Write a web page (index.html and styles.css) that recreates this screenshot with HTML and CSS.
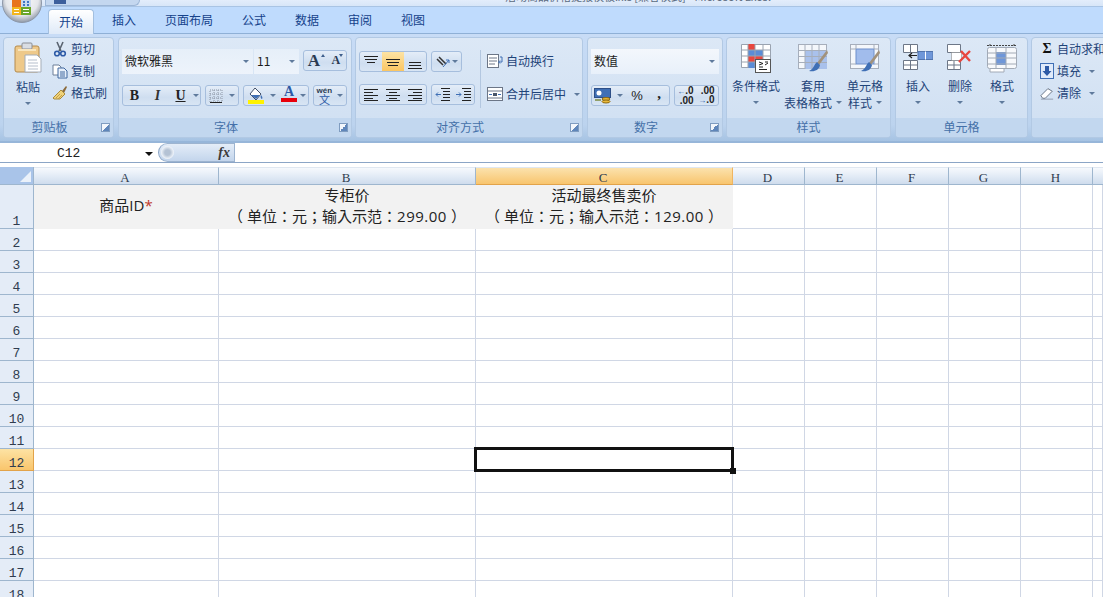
FILE: index.html
```html
<!DOCTYPE html>
<html lang="zh-CN">
<head>
<meta charset="utf-8">
<title>Excel</title>
<link rel="stylesheet" href="styles.css">
</head>
<body>
<div class="app">
  <svg class="orb" viewBox="0 0 44 30" width="44" height="30">
    <defs>
      <radialGradient id="orbg" cx="50%" cy="40%" r="60%"><stop offset="0" stop-color="#fff"/><stop offset=".7" stop-color="#e4e6ea"/><stop offset="1" stop-color="#8f98a6"/></radialGradient>
    </defs>
    <circle cx="22" cy="3" r="19.5" fill="url(#orbg)" stroke="#8c97a8"/>
    <rect x="12" y="0" width="9" height="7" fill="#e8741c"/>
    <rect x="21" y="0" width="10" height="7" fill="#c9d9f0"/>
    <rect x="12" y="7" width="9" height="8" fill="#f3b61e"/>
    <rect x="21" y="7" width="10" height="8" fill="#6aa628"/>
    <path d="M23 1h2v2h-2zM27 1h2v2h-2zM23 4h2v2h-2zM27 4h2v2h-2z" fill="#3f74c4"/>
    <path d="M14 9h5v1h-5zM14 12h5v1h-5zM23 9h6v1h-6zM23 12h6v1h-6z" fill="#fff"/>
  </svg>

  <header class="titlebar">
    <div class="qat"><span class="qat-save"></span></div>
    <div class="title-text">活动商品价格提报模板.xls [兼容模式] - Microsoft Excel</div>
  </header>

  <nav class="tabs">
    <span class="tab tab-active">开始</span>
    <span class="tab">插入</span>
    <span class="tab">页面布局</span>
    <span class="tab">公式</span>
    <span class="tab">数据</span>
    <span class="tab">审阅</span>
    <span class="tab">视图</span>
  </nav>

  <section class="ribbon">
    <div class="group g-clip">
      <div class="group-body">
        <div class="big big-paste">
          <svg class="big-ic" viewBox="0 0 30 32" width="30" height="32">
            <rect x="2" y="4" width="24" height="26" rx="2" fill="#eec98a" stroke="#b48a4c"/>
            <rect x="9" y="1" width="10" height="6" rx="1" fill="#d9dde3" stroke="#8b8f96"/>
            <rect x="5" y="7" width="18" height="2" fill="#f8e6bf"/>
            <path d="M12 13h12l4 4v13H12z" fill="#fff" stroke="#a5adb8"/>
            <path d="M15 18h9M15 21h10M15 24h10M15 27h10" stroke="#b6bfcc"/>
          </svg>
          <span class="big-text">粘贴</span>
          <span class="big-text"><i class="caret"></i></span>
        </div>
        <div class="small-list">
          <div class="small">
            <svg viewBox="0 0 16 16" width="16" height="16"><path d="M5 1l4 9M11 1L7 10" stroke="#5a6470" stroke-width="1.6" fill="none"/><circle cx="5" cy="12.5" r="2.3" fill="none" stroke="#2d5aa6" stroke-width="1.6"/><circle cx="11" cy="12.5" r="2.3" fill="none" stroke="#2d5aa6" stroke-width="1.6"/></svg>
            <span>剪切</span>
          </div>
          <div class="small">
            <svg viewBox="0 0 16 16" width="16" height="16"><path d="M1 2h6l2 2v8H1z" fill="#fff" stroke="#6d7f98"/><path d="M6 5h6l3 3v7H6z" fill="#e6effa" stroke="#41689f"/><path d="M8 9h5M8 11h5M8 13h5" stroke="#41689f"/></svg>
            <span>复制</span>
          </div>
          <div class="small">
            <svg viewBox="0 0 16 16" width="16" height="16"><path d="M10 6l4-5 1 1-3 6z" fill="#8b6a3a"/><path d="M9 5l4 4-5 5-6 0 -1-1z" fill="#efd27a" stroke="#a88a3c"/><path d="M4 13l4-4M6 14l4-4" stroke="#c49f45"/></svg>
            <span>格式刷</span>
          </div>
        </div>
      </div>
      <div class="group-label"><span>剪贴板</span><i class="launcher"></i></div>
    </div>

    <div class="group g-font">
      <div class="group-body stack">
        <div class="tool-row">
          <div class="combo w-font"><span>微软雅黑</span><i class="caret"></i></div>
          <div class="combo w-size"><span>11</span><i class="caret"></i></div>
          <div class="btns w-grow">
            <span class="btn-cell glyph-a big-a">A<i class="tri-up"></i></span>
            <span class="btn-cell glyph-a small-a">A<i class="tri-down"></i></span>
          </div>
        </div>
        <div class="tool-row row-low">
          <div class="btns w-biu">
            <span class="btn-cell fmt fmt-b">B</span>
            <span class="btn-cell fmt fmt-i">I</span>
            <span class="btn-cell fmt fmt-u">U</span>
            <span class="btn-cell"><i class="caret"></i></span>
          </div>
          <div class="btns w-34">
            <span class="btn-cell">
              <svg viewBox="0 0 14 14" width="14" height="14"><path d="M1 1h12v12H1zM5 1v12M9 1v12M1 5h12M1 9h12" fill="none" stroke="#8a94a3" stroke-dasharray="1 1"/><path d="M1 13.5h12" stroke="#222"/></svg>
            </span>
            <span class="btn-cell"><i class="caret"></i></span>
          </div>
          <div class="btns w-fill">
            <span class="btn-cell">
              <svg viewBox="0 0 18 18" width="18" height="18"><path d="M8 1l6 6-5 6-6-6z" fill="#fff" stroke="#41506a"/><path d="M4 8h9l-4 4z" fill="#3f6fb5"/><path d="M14 8c1 1 2 3 1 4-1 0-2-2-1-4z" fill="#3f6fb5"/><rect x="1" y="13" width="16" height="4" fill="#fff200"/></svg>
            </span>
            <span class="btn-cell"><i class="caret"></i></span>
            <span class="btn-cell color-a">A</span>
            <span class="btn-cell"><i class="caret"></i></span>
          </div>
          <div class="btns w-34">
            <span class="btn-cell wen"><small>wén</small><b>文</b></span>
            <span class="btn-cell"><i class="caret"></i></span>
          </div>
        </div>
      </div>
      <div class="group-label"><span>字体</span><i class="launcher"></i></div>
    </div>

    <div class="group g-align">
      <div class="group-body align-body">
        <div class="align-tools">
          <div class="tool-row">
            <div class="btns w-68">
              <span class="btn-cell"><svg viewBox="0 0 14 14" width="14" height="14"><path d="M0 1.5h14M1 4.5h12M3 7.500h8" stroke="#222"/></svg></span>
              <span class="btn-cell on"><svg viewBox="0 0 14 14" width="14" height="14"><path d="M0 4.500h14M1 7.500h12M2 10.500h10" stroke="#222"/></svg></span>
              <span class="btn-cell"><svg viewBox="0 0 14 14" width="14" height="14"><path d="M1 7.500h12M1 10.500h12M0 13.500h14" stroke="#222"/></svg></span>
            </div>
            <div class="btns w-31">
              <span class="btn-cell">
                <svg viewBox="0 0 16 14" width="16" height="14"><path d="M1 4l6 6M3 2l7 7" stroke="#333" stroke-width="1.500"/><path d="M7 12l6-7" stroke="#3f6fb5"/><path d="M10 5h3v3" fill="none" stroke="#3f6fb5"/></svg>
                <i class="caret"></i>
              </span>
            </div>
          </div>
          <div class="tool-row">
            <div class="btns w-68">
              <span class="btn-cell"><svg viewBox="0 0 14 12" width="14" height="12"><path d="M0 .500h14M0 3.500h9M0 6.500h14M0 9.500h9M0 11.500h14" stroke="#222"/></svg></span>
              <span class="btn-cell"><svg viewBox="0 0 14 12" width="14" height="12"><path d="M0 .500h14M3 3.500h8M0 6.500h14M3 9.500h8M0 11.500h14" stroke="#222"/></svg></span>
              <span class="btn-cell"><svg viewBox="0 0 14 12" width="14" height="12"><path d="M0 .500h14M5 3.500h9M0 6.500h14M5 9.500h9M0 11.500h14" stroke="#222"/></svg></span>
            </div>
            <div class="btns w-44">
              <span class="btn-cell"><svg viewBox="0 0 15 13" width="15" height="13"><path d="M6 .500h9M8 3.500h7M8 6.500h7M8 9.500h7M6 12.500h9" stroke="#222"/><path d="M6 6.500H1M3 4.500l-2 2 2 2" stroke="#3f6fb5" fill="none"/></svg></span>
              <span class="btn-cell"><svg viewBox="0 0 15 13" width="15" height="13"><path d="M6 .500h9M8 3.500h7M8 6.500h7M8 9.500h7M6 12.500h9" stroke="#222"/><path d="M0 6.500h5M3 4.500l2 2-2 2" stroke="#3f6fb5" fill="none"/></svg></span>
            </div>
          </div>
        </div>
        <i class="vsep"></i>
        <div class="align-wrap">
          <div class="small">
            <svg viewBox="0 0 16 16" width="16" height="16"><rect x=".5" y="1.500" width="11" height="13" fill="#fff" stroke="#6c7687"/><path d="M2 5h8M2 8h8M2 11h6" stroke="#6c7687"/><path d="M13 4h2v5h-3M13 7.500l-1.500 1.500 1.500 1.500" fill="none" stroke="#3f6fb5"/></svg>
            <span>自动换行</span>
          </div>
          <div class="small">
            <svg viewBox="0 0 16 16" width="16" height="16"><rect x=".5" y="1.500" width="15" height="13" fill="#fff" stroke="#6c7687"/><path d="M1 5h14M1 12h14" stroke="#6c7687"/><path d="M2 8.500h3M11 8.500h3" stroke="#3f6fb5"/><path d="M6 7h4v3H6z" fill="#4a5568"/></svg>
            <span>合并后居中</span><i class="caret caret-gap"></i>
          </div>
        </div>
      </div>
      <div class="group-label"><span>对齐方式</span><i class="launcher"></i></div>
    </div>

    <div class="group g-num">
      <div class="group-body stack">
        <div class="tool-row">
          <div class="combo w-numfmt"><span>数值</span><i class="caret"></i></div>
        </div>
        <div class="tool-row row-low">
          <div class="btns w-acc">
            <span class="btn-cell">
              <svg viewBox="0 0 18 16" width="18" height="16"><rect x=".5" y=".5" width="16" height="9" fill="#3f6fb5" stroke="#2d4f87"/><circle cx="5" cy="5" r="2.500" fill="#fff"/><ellipse cx="12" cy="11" rx="4" ry="1.500" fill="#e9b93c" stroke="#8e6a12"/><ellipse cx="12" cy="13.500" rx="4" ry="1.500" fill="#e9b93c" stroke="#8e6a12"/><path d="M1 12h6" stroke="#7c8a3c" stroke-width="1.500"/></svg>
            </span>
            <span class="btn-cell"><i class="caret"></i></span>
            <span class="btn-cell pct">%</span>
            <span class="btn-cell comma">,</span>
          </div>
          <div class="btns w-dec">
            <span class="btn-cell dec"><span><i class="dec-arrow">←</i>.0<br>.00</span></span>
            <span class="btn-cell dec"><span>.00<br><i class="dec-arrow">→</i>.0</span></span>
          </div>
        </div>
      </div>
      <div class="group-label"><span>数字</span><i class="launcher"></i></div>
    </div>

    <div class="group g-styles">
      <div class="group-body big-row">
        <div class="big w-50">
          <svg class="big-ic" viewBox="0 0 30 30" width="30" height="30">
            <path d="M.5 .5h29v23H.5z" fill="#fff" stroke="#9aa3b0"/>
            <rect x="7" y="0" width="7" height="6" fill="#e8473f"/><rect x="7" y="6" width="15" height="6" fill="#5b8cd6"/><rect x="7" y="12" width="15" height="6" fill="#e8473f"/><rect x="7" y="18" width="7" height="6" fill="#5b8cd6"/>
            <path d="M7 0v24M14 0v24M22 0v24M0 6h30M0 12h30M0 18h30" stroke="#9aa3b0" fill="none"/>
            <rect x="14.500" y="15.500" width="15" height="13" fill="#fff" stroke="#555"/>
            <path d="M18 18l4 1.500-4 1.500M18 23h4M18 25.500h8M24 18h3M24 21l3-2" stroke="#222" fill="none"/>
          </svg>
          <span class="big-text">条件格式</span>
          <span class="big-text"><i class="caret"></i></span>
        </div>
        <div class="big w-58">
          <svg class="big-ic" viewBox="0 0 30 30" width="30" height="30">
            <rect x=".5" y=".5" width="28" height="24" fill="#f4f7fb" stroke="#a6aebb"/>
            <rect x="7" y="7" width="22" height="18" fill="#a9c1ec"/>
            <path d="M7 0v25M14 0v25M21 0v25M0 6.500h29M0 12.500h29M0 18.500h29" stroke="#a6aebb"/>
            <path d="M29 6L19 19l2 2L30 9z" fill="#a2927c"/><path d="M19 18c-3 2-3 7-8 9 6 1 10-1 11-6z" fill="#3f6fb5"/>
          </svg>
          <span class="big-text">套用</span>
          <span class="big-text big-nowrap">表格格式<i class="caret caret-gap2"></i></span>
        </div>
        <div class="big w-38">
          <svg class="big-ic" viewBox="0 0 30 30" width="30" height="30">
            <rect x=".5" y=".5" width="28" height="24" fill="#f4f7fb" stroke="#a6aebb"/>
            <rect x="6" y="5" width="18" height="15" fill="#a1bcec" stroke="#6e90cb"/>
            <path d="M0 5h6M24 5h5M0 20h6M24 20h5M6 0v5M24 0v5" stroke="#a6aebb"/>
            <path d="M29 6L19 19l2 2L30 9z" fill="#a2927c"/><path d="M19 18c-3 2-3 7-8 9 6 1 10-1 11-6z" fill="#3f6fb5"/>
          </svg>
          <span class="big-text">单元格</span>
          <span class="big-text big-nowrap">样式<i class="caret caret-gap2"></i></span>
        </div>
      </div>
      <div class="group-label group-label-plain"><span>样式</span></div>
    </div>

    <div class="group g-cells">
      <div class="group-body big-row big-row-cells">
        <div class="big w-42">
          <svg class="big-ic" viewBox="0 0 30 30" width="30" height="30">
            <path d="M.5 .5h14v8H.5zM7.500 .5v8M.5 16.500h14v9H.5zM7.500 16.500v9M.5 21h14" fill="#fff" stroke="#6d7787"/>
            <rect x="15" y="7.500" width="15" height="8" fill="#6f97d9" stroke="#5174ad"/><path d="M22.500 7.500v8" stroke="#fff"/>
            <path d="M14 11.500H6M9 9l-3 2.500L9 14" fill="none" stroke="#222" stroke-width="1.200"/>
          </svg>
          <span class="big-text">插入</span>
          <span class="big-text"><i class="caret"></i></span>
        </div>
        <div class="big w-42">
          <svg class="big-ic" viewBox="0 0 26 30" width="26" height="30">
            <path d="M.5 .5h13v8H.5zM.5 16.500h13v9H.5zM7 16.500v9M.5 21h13" fill="#fff" stroke="#6d7787"/>
            <rect x="4.500" y="8.500" width="10" height="8" fill="#fff" stroke="#777" stroke-dasharray="1 1"/>
            <path d="M14 7l9 10M23 7l-11 11" stroke="#e8473f" stroke-width="2.400"/>
          </svg>
          <span class="big-text">删除</span>
          <span class="big-text"><i class="caret"></i></span>
        </div>
        <div class="big w-42">
          <svg class="big-ic" viewBox="0 0 30 30" width="30" height="30">
            <path d="M0 1.500h30M3 0v3M27 0v3" stroke="#444" stroke-dasharray="2 1"/>
            <rect x=".5" y="3.500" width="29" height="21" rx="2" fill="#f7f9fc" stroke="#a2aab6"/>
            <rect x="9" y="8" width="10" height="13" fill="#6f97d9"/>
            <path d="M9 3v25M19 3v21M0 9h30M0 14h30M0 20h30" stroke="#a2aab6" fill="none"/>
            <path d="M3 25v3h14v-3" fill="#fff" stroke="#a2aab6"/>
          </svg>
          <span class="big-text">格式</span>
          <span class="big-text"><i class="caret"></i></span>
        </div>
      </div>
      <div class="group-label group-label-plain"><span>单元格</span></div>
    </div>

    <div class="group g-edit">
      <div class="group-body edit-body">
        <div class="small"><b class="sigma">Σ</b><span>自动求和</span></div>
        <div class="small">
          <svg viewBox="0 0 14 16" width="14" height="16"><rect x=".5" y=".5" width="13" height="15" fill="#dfeafa" stroke="#3f6fb5"/><path d="M5 3h4v5h2.500L7 13 2.500 8H5z" fill="#2d5aa6"/></svg>
          <span>填充</span><i class="caret caret-gap"></i>
        </div>
        <div class="small">
          <svg viewBox="0 0 16 16" width="14" height="16"><path d="M1 11L9 3l5 3-8 8H3z" fill="#fff" stroke="#5c6879"/><path d="M1 15h14" stroke="#8a96a8"/></svg>
          <span>清除</span><i class="caret caret-gap"></i>
        </div>
      </div>
      <div class="group-label group-label-plain"></div>
    </div>
  </section>

  <div class="formula">
    <div class="namebox"><span>C12</span><i class="caret caret-dark"></i></div>
    <div class="fx-pill"><i class="fx-knob"></i><em>fx</em></div>
    <div class="fx-input"></div>
  </div>

  <div class="sheet">
    <div class="corner"><i></i></div>
    <div class="ch">A</div><div class="ch">B</div><div class="ch ch-on">C</div><div class="ch">D</div><div class="ch">E</div><div class="ch">F</div><div class="ch">G</div><div class="ch">H</div><div class="ch ch-end"></div>

    <div class="rh rh-first">1</div>
    <div class="c filled"><div lang="zh-Hant">商品ID<span class="req">*</span></div></div>
    <div class="c filled"><div lang="zh-Hant">专柜价<br><span class="po">（</span>单位：元；输入示范：<span class="num">299.00</span><span class="pc">）</span></div></div>
    <div class="c filled"><div lang="zh-Hant">活动最终售卖价<br><span class="po">（</span>单位：元；输入示范：<span class="num">129.00</span><span class="pc">）</span></div></div>
    <div class="c"></div><div class="c"></div><div class="c"></div><div class="c"></div><div class="c"></div><div class="c"></div>

    <div class="rh">2</div><div class="c"></div><div class="c"></div><div class="c"></div><div class="c"></div><div class="c"></div><div class="c"></div><div class="c"></div><div class="c"></div><div class="c"></div>
    <div class="rh">3</div><div class="c"></div><div class="c"></div><div class="c"></div><div class="c"></div><div class="c"></div><div class="c"></div><div class="c"></div><div class="c"></div><div class="c"></div>
    <div class="rh">4</div><div class="c"></div><div class="c"></div><div class="c"></div><div class="c"></div><div class="c"></div><div class="c"></div><div class="c"></div><div class="c"></div><div class="c"></div>
    <div class="rh">5</div><div class="c"></div><div class="c"></div><div class="c"></div><div class="c"></div><div class="c"></div><div class="c"></div><div class="c"></div><div class="c"></div><div class="c"></div>
    <div class="rh">6</div><div class="c"></div><div class="c"></div><div class="c"></div><div class="c"></div><div class="c"></div><div class="c"></div><div class="c"></div><div class="c"></div><div class="c"></div>
    <div class="rh">7</div><div class="c"></div><div class="c"></div><div class="c"></div><div class="c"></div><div class="c"></div><div class="c"></div><div class="c"></div><div class="c"></div><div class="c"></div>
    <div class="rh">8</div><div class="c"></div><div class="c"></div><div class="c"></div><div class="c"></div><div class="c"></div><div class="c"></div><div class="c"></div><div class="c"></div><div class="c"></div>
    <div class="rh">9</div><div class="c"></div><div class="c"></div><div class="c"></div><div class="c"></div><div class="c"></div><div class="c"></div><div class="c"></div><div class="c"></div><div class="c"></div>
    <div class="rh">10</div><div class="c"></div><div class="c"></div><div class="c"></div><div class="c"></div><div class="c"></div><div class="c"></div><div class="c"></div><div class="c"></div><div class="c"></div>
    <div class="rh">11</div><div class="c"></div><div class="c"></div><div class="c"></div><div class="c"></div><div class="c"></div><div class="c"></div><div class="c"></div><div class="c"></div><div class="c"></div>
    <div class="rh rh-on">12</div><div class="c"></div><div class="c"></div><div class="c c-active"><i class="cursor"></i><i class="handle"></i></div><div class="c"></div><div class="c"></div><div class="c"></div><div class="c"></div><div class="c"></div><div class="c"></div>
    <div class="rh">13</div><div class="c"></div><div class="c"></div><div class="c"></div><div class="c"></div><div class="c"></div><div class="c"></div><div class="c"></div><div class="c"></div><div class="c"></div>
    <div class="rh">14</div><div class="c"></div><div class="c"></div><div class="c"></div><div class="c"></div><div class="c"></div><div class="c"></div><div class="c"></div><div class="c"></div><div class="c"></div>
    <div class="rh">15</div><div class="c"></div><div class="c"></div><div class="c"></div><div class="c"></div><div class="c"></div><div class="c"></div><div class="c"></div><div class="c"></div><div class="c"></div>
    <div class="rh">16</div><div class="c"></div><div class="c"></div><div class="c"></div><div class="c"></div><div class="c"></div><div class="c"></div><div class="c"></div><div class="c"></div><div class="c"></div>
    <div class="rh">17</div><div class="c"></div><div class="c"></div><div class="c"></div><div class="c"></div><div class="c"></div><div class="c"></div><div class="c"></div><div class="c"></div><div class="c"></div>
    <div class="rh">18</div><div class="c"></div><div class="c"></div><div class="c"></div><div class="c"></div><div class="c"></div><div class="c"></div><div class="c"></div><div class="c"></div><div class="c"></div>
  </div>
</div>
</body>
</html>
```

FILE: styles.css
```css
* { box-sizing: border-box; }
html, body { margin: 0; height: 100%; overflow: hidden; background: #fff; }
body { font-family: "Noto Sans CJK SC", "Liberation Sans", sans-serif; font-size: 12px; color: #1f4479; }
i { font-style: normal; }

.app { position: relative; width: 1103px; height: 597px; overflow: hidden; }
.orb { position: absolute; left: 0; top: 0; z-index: 3; }

/* title bar */
.titlebar { height: 7px; display: flex; background: linear-gradient(#e3edfb, #d8e6f8); border-bottom: 1px solid #a9c4e4; overflow: hidden; }
.qat { margin-left: 45px; width: 95px; height: 6px; background: #c4d7ef; border: 1px solid #9db6d6; border-top: 0; border-radius: 0 0 8px 0; padding-left: 8px; flex: none; }
.qat-save { display: block; width: 12px; height: 4px; background: #3c5f9c; }
.title-text { margin-left: 365px; margin-top: -11px; line-height: 14px; font-size: 11px; color: #5a6a80; white-space: nowrap; }

/* tabs */
.tabs { height: 27px; display: flex; align-items: flex-end; padding-left: 48px; background: #bfdbfd; border-bottom: 1px solid #8fb0d6; }
.tab { padding: 0 14.5px; height: 26px; line-height: 26px; font-size: 12px; color: #15428b; white-space: nowrap; }
.tab-active { padding: 0 10px; height: 25px; line-height: 24px; margin: 0 3.5px -1px 0; background: linear-gradient(#fff, #dfeaf8); border: 1px solid #a3bfdf; border-bottom: 0; border-radius: 4px 4px 0 0; }

/* ribbon */
.ribbon { height: 109px; display: flex; gap: 3px; padding: 3px 0 0 3px; background: linear-gradient(#c8dcf6, #bcd3ee 85%, #a6c3e3); border-bottom: 2px solid #97b6d9; overflow: hidden; }
.group { height: 101px; flex: none; display: flex; flex-direction: column; border: 1px solid #b2c9e4; border-radius: 4px; overflow: hidden; background: linear-gradient(#dce8f6, #cfdff2); }
.group-body { height: 80px; display: flex; }
.group-label { height: 19px; display: flex; align-items: center; background: #c2d7ef; color: #4470a8; padding-right: 3px; }
.group-label span { flex: 1; text-align: center; line-height: 17px; margin-bottom: 2px; }
.group-label-plain { padding-right: 0; }
.launcher { width: 9px; height: 9px; margin-left: 6px; border: 1px solid #7f9cc0; background: linear-gradient(135deg, #f2f6fb 50%, #5f86ba 50%); }

.g-clip { width: 111px; }
.g-font { width: 234px; margin-left: 1px; }
.g-align { width: 228px; }
.g-num { width: 136px; margin-left: 1px; }
.g-styles { width: 165px; }
.g-cells { width: 133px; margin-left: 1px; }
.g-edit { width: 100px; }

/* large buttons */
.big { display: flex; flex-direction: column; align-items: center; flex: none; padding-top: 6px; }
.big-ic { flex: none; margin-bottom: 3px; }
.big-text { height: 17px; line-height: 17px; display: flex; align-items: center; justify-content: center; white-space: nowrap; font-size: 12px; }
.big-paste { width: 30px; margin-left: 9px; padding-top: 4px; }
.big-paste .big-ic { margin-bottom: 4px; }
.big-row { padding-left: 4px; }
.big-row-cells { padding-left: 1px; }
.w-50 { width: 50px; margin-right: 3px; }
.w-58 { width: 58px; margin-right: 4px; }
.w-38 { width: 38px; }
.w-42 { width: 42px; }

/* small rows */
.small-list { display: flex; flex-direction: column; margin-left: 9px; }
.small { height: 22px; display: flex; align-items: center; gap: 3px; white-space: nowrap; }
.small svg { flex: none; }
.small span { margin-bottom: 2px; }

/* carets */
.caret { display: inline-block; width: 0; height: 0; border: 3px solid transparent; border-top: 3px solid #5f7a9c; border-bottom: 0; }
.caret-gap { margin-left: 5px; }
.caret-gap2 { margin-left: 4px; }
.caret-dark { border-width: 4px; border-bottom: 0; border-top-color: #111; }

/* tool rows */
.stack { flex-direction: column; padding: 11px 0 0 3px; }
.tool-row { display: flex; gap: 4px; }
.row-low { margin-top: 11px; }
.combo { height: 25px; display: flex; align-items: center; justify-content: space-between; padding: 0 4px 0 3px; background: linear-gradient(#e6eff9, #edf3fb); color: #1c1c1c; font-size: 12px; }
.combo span { margin-bottom: 2px; }
.w-font { width: 131px; }
.w-size { width: 45px; margin-left: -3px; }
.w-numfmt { width: 128px; background: linear-gradient(#f3f7fc, #e8f0fa); }

.btns { display: flex; height: 21px; border: 1px solid #a6bedd; border-radius: 3px; background: linear-gradient(#e4edf8, #cfdef0 60%, #d8e5f4); overflow: hidden; }
.btn-cell { flex: 1 1 auto; display: flex; align-items: center; justify-content: center; position: relative; min-width: 0; }
.on { background: linear-gradient(#fde3a4, #fbc662); }
.w-grow { width: 44px; margin-top: 1px; }
.w-biu { width: 79px; }
.w-34 { width: 34px; }
.w-fill { width: 66px; }
.w-68 { width: 68px; }
.w-31 { width: 31px; }
.w-44 { width: 44px; }
.w-acc { width: 79px; }
.w-dec { width: 45px; }

.glyph-a { font-family: "Liberation Serif", serif; font-weight: bold; color: #2a3a52; }
.big-a { font-size: 17px; padding-right: 4px; }
.small-a { font-size: 12px; padding-right: 2px; }
.tri-up, .tri-down { position: absolute; right: 3px; top: 3px; width: 0; height: 0; border: 2px solid transparent; }
.tri-up { border-bottom: 3px solid #3f5f8c; border-top: 0; }
.tri-down { border-top: 3px solid #3f5f8c; border-bottom: 0; }

.fmt { font-family: "Liberation Serif", serif; font-size: 14px; color: #222; flex: 0 0 23px; }
.fmt-b { font-weight: bold; }
.fmt-i { font-style: italic; font-weight: bold; color: #333; }
.fmt-u { text-decoration: underline; font-weight: bold; }
.color-a { font-family: "Liberation Serif", serif; font-weight: bold; font-size: 14px; color: #2d5aa6; line-height: 14px; border-bottom: 4px solid #e8000b; flex: 0 0 16px; height: 16px; margin-left: 3px; }
.wen { flex-direction: column; color: #2d5aa6; line-height: 8px; }
.wen small { font-family: "Liberation Sans", sans-serif; font-size: 8px; color: #2a3a52; font-weight: bold; line-height: 7px; }
.wen b { font-size: 11px; font-weight: normal; line-height: 11px; }
.pct { font-family: "Liberation Sans", sans-serif; color: #222; font-size: 13px; flex: 0 0 24px; }
.comma { font-family: "Liberation Serif", serif; color: #222; font-size: 15px; font-weight: bold; flex: 0 0 20px; padding-bottom: 5px; }
.dec { flex: 0 0 21px; font-family: "Liberation Sans", sans-serif; font-size: 10px; line-height: 9px; color: #222; text-align: right; font-weight: bold; }
.dec-arrow { color: #2d5aa6; font-size: 8px; }

/* align group */
.align-body { padding: 13px 0 0 3px; }
.align-tools { width: 116px; display: flex; flex-direction: column; gap: 12px; flex: none; }
.vsep { width: 1px; height: 58px; margin: -1px 6px 0 5px; background: #b3c7e0; flex: none; }
.align-wrap { display: flex; flex-direction: column; gap: 11px; margin-top: -1px; }

.edit-body { flex-direction: column; padding: 0 0 0 8px; }
.sigma { width: 14px; font-family: "Liberation Serif", serif; font-size: 14px; color: #111; text-align: center; }

/* formula bar */
.formula { height: 20px; display: flex; background: #fff; border-bottom: 1px solid #8ba5c6; }
.namebox { width: 158px; display: flex; align-items: center; justify-content: space-between; padding: 2px 5px 0 57px; font-family: "Liberation Mono", monospace; font-size: 13px; color: #222; }
.fx-pill { width: 77px; height: 19px; display: flex; align-items: center; justify-content: flex-end; padding-right: 4px; border: 1px solid #9db4d0; border-left: 1px solid #8ba5c6; border-radius: 10px 0 0 10px; background: linear-gradient(#e4edf8, #c3d5ec); font-family: "Liberation Serif", serif; color: #3a3a3a; font-size: 14px; position: relative; }
.fx-pill em { font-weight: bold; }
.fx-knob { position: absolute; left: 2px; top: 2px; width: 13px; height: 13px; border-radius: 50%; background: radial-gradient(#b4c2d4 30%, #f2f6fb 70%); }
.fx-input { flex: 1; }

/* sheet */
.sheet { margin-top: 4px; display: grid; grid-template-columns: 34px 185px 257px 257px 72px 72px 72px 72px 72px 1fr; grid-template-rows: 18px 44px repeat(17, 22px); }
.corner { background: #a9c4e9; border-right: 1px solid #9eb6ce; border-bottom: 1px solid #9eb6ce; position: relative; }
.corner i { position: absolute; right: 2px; bottom: 2px; width: 0; height: 0; border-style: solid; border-width: 0 0 11px 11px; border-color: transparent transparent #eaf1fa transparent; }
.ch { background: linear-gradient(#f6f9fd, #e1eaf5 55%, #cfdced); border-right: 1px solid #9eb6ce; border-bottom: 1px solid #9eb6ce; border-top: 1px solid #dfe7f1; text-align: center; line-height: 19px; font-family: "Liberation Serif", serif; font-size: 13px; color: #2f3c4f; padding-right: 2px; }
.ch-on { background: linear-gradient(#fbe2ad, #f8c56e); border-right-color: #f0b560; border-bottom-color: #e2a34a; }
.ch-end { border-right: 0; }
.rh { background: #e4ecf7; border-right: 1px solid #9eb6ce; border-bottom: 1px solid #9eb6ce; font-family: "Liberation Mono", monospace; font-size: 13px; line-height: 12px; color: #2f3c4f; display: flex; align-items: flex-end; justify-content: center; }
.rh-on { background: linear-gradient(#fde3a4, #f9c56c); border-bottom-color: #e2a34a; border-right-color: #e2a34a; }
.c { border-right: 1px solid #d0d7e5; border-bottom: 1px solid #d0d7e5; }
.filled { background: #f2f2f2; border-color: #f2f2f2; display: flex; align-items: center; justify-content: center; text-align: center; font-family: "Open Sans", "Noto Sans CJK TC", "Noto Sans CJK SC", sans-serif; font-size: 15px; line-height: 21px; color: #222; white-space: nowrap; text-spacing-trim: space-all; padding-bottom: 2px; }
.po { margin: 0 4px 0 -4px; }
.pc { margin: 0 -4px 0 4px; }
.num { letter-spacing: .5px; }
.req { color: #c0392b; }
.c-active { position: relative; }
.cursor { position: absolute; left: -2px; top: -2px; right: -2px; bottom: -2px; border: 3px solid #111; z-index: 2; }
.handle { position: absolute; right: -4px; bottom: -4px; width: 6px; height: 6px; background: #111; z-index: 3; }
```
